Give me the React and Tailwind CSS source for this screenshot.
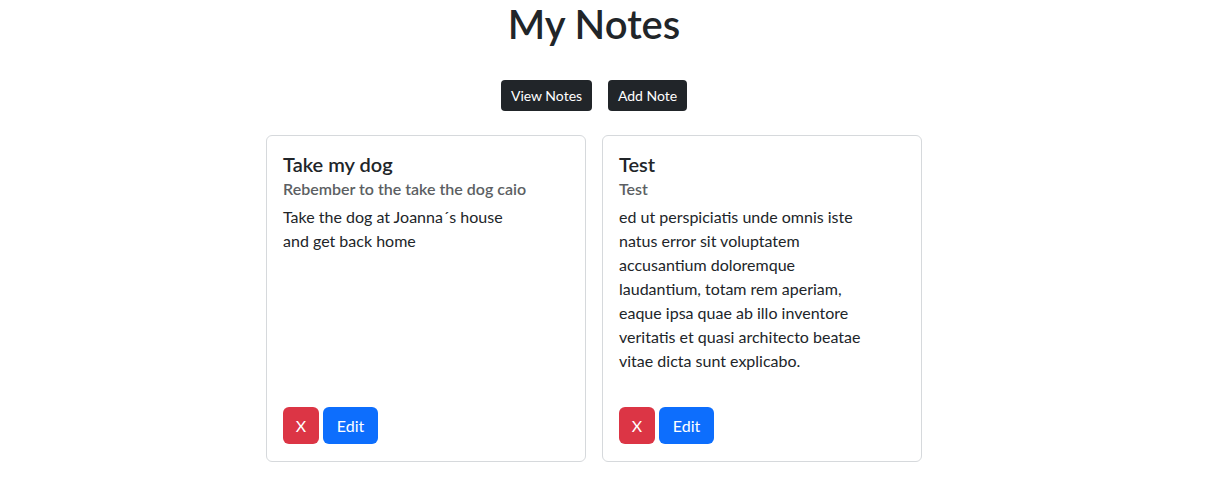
import React from 'react';

const notes = [
  {
    title: 'Take my dog',
    subtitle: 'Rebember to the take the dog caio',
    lines: ['Take the dog at Joanna´s house', 'and get back home'],
  },
  {
    title: 'Test',
    subtitle: 'Test',
    lines: [
      'ed ut perspiciatis unde omnis iste',
      'natus error sit voluptatem',
      'accusantium doloremque',
      'laudantium, totam rem aperiam,',
      'eaque ipsa quae ab illo inventore',
      'veritatis et quasi architecto beatae',
      'vitae dicta sunt explicabo.',
    ],
  },
];

const NoteCard = ({ note }) => (
  <div className="w-[320px] h-[327px] border border-[#d6d9dc] rounded-[6px] bg-white p-4 flex flex-col">
    <h5 className="text-[20px] leading-[24px] font-semibold text-[#212529]">{note.title}</h5>
    <h6 className="text-[16px] leading-[24px] font-semibold text-[#5c5f63] mt-[1px]">{note.subtitle}</h6>
    <div className="mt-[4px] text-[16px] leading-[24px] text-[#212529]">
      {note.lines.map((l, i) => (
        <div key={i}>{l}</div>
      ))}
    </div>
    <div className="mt-auto flex gap-1 mb-[1px]">
      <button className="h-[37px] w-[36px] rounded-[6px] bg-[#dc3545] text-white text-[16px]">X</button>
      <button className="h-[37px] w-[55px] rounded-[6px] bg-[#0d6efd] text-white text-[16px]">Edit</button>
    </div>
  </div>
);

const App = () => {
  return (
    <div className="w-[1188px] min-h-[480px] bg-white flex flex-col items-center font-['Lato',sans-serif] text-[#212529]">
      <h1 className="text-[40px] leading-[48px] font-semibold text-[#212529]">My Notes</h1>
      <div className="mt-[32px] flex gap-4">
        <button className="h-[31px] w-[91px] rounded-[4px] bg-[#212529] text-white text-[14px]">View Notes</button>
        <button className="h-[31px] w-[79px] rounded-[4px] bg-[#212529] text-white text-[14px]">Add Note</button>
      </div>
      <div className="mt-[24px] flex gap-[16px]">
        {notes.map((n, i) => (
          <NoteCard key={i} note={n} />
        ))}
      </div>
    </div>
  );
};

export default App;
